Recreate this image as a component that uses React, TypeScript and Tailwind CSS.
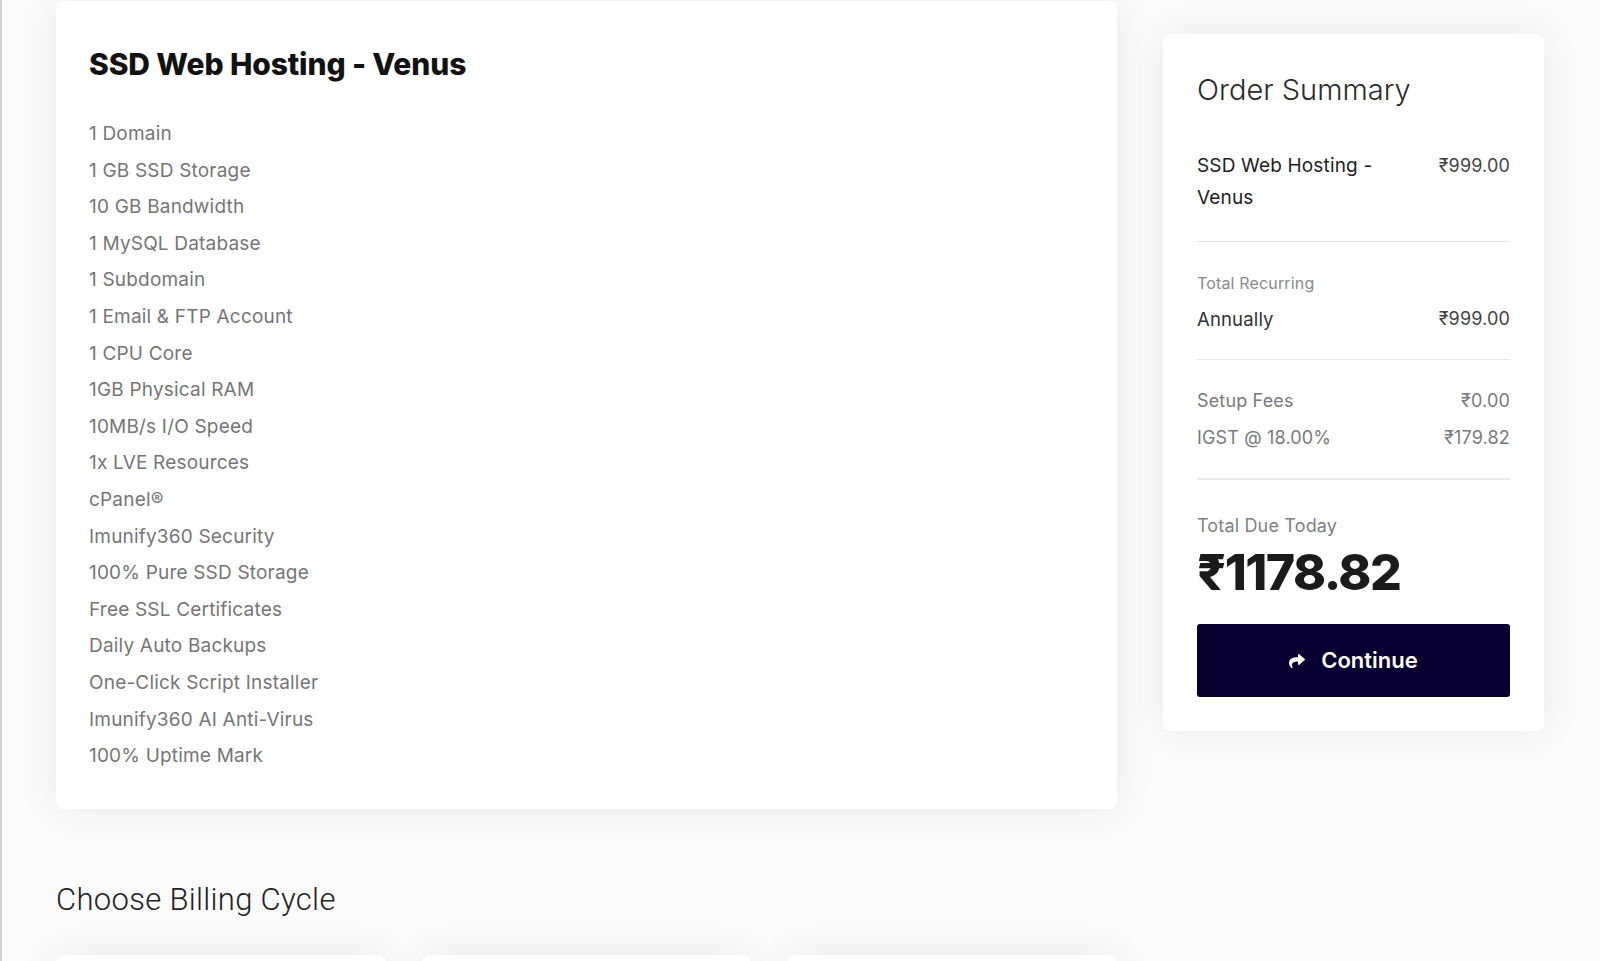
import { FaShare } from "react-icons/fa";

const features = [
  "1 Domain",
  "1 GB SSD Storage",
  "10 GB Bandwidth",
  "1 MySQL Database",
  "1 Subdomain",
  "1 Email & FTP Account",
  "1 CPU Core",
  "1GB Physical RAM",
  "10MB/s I/O Speed",
  "1x LVE Resources",
  "cPanel®",
  "Imunify360 Security",
  "100% Pure SSD Storage",
  "Free SSL Certificates",
  "Daily Auto Backups",
  "One-Click Script Installer",
  "Imunify360 AI Anti-Virus",
  "100% Uptime Mark",
];

function ProductCard() {
  return (
    <div className="mt-px rounded-lg bg-white pl-[33px] pr-8 pt-[45px] pb-[34px] shadow-[0_0_40px_rgba(0,0,0,0.07)]">
      <h2 className="text-[30px] leading-[36px] font-extrabold tracking-[-0.004em] text-[#121212]">
        SSD Web Hosting - Venus
      </h2>
      <ul className="mt-[34px]">
        {features.map((f) => (
          <li key={f} className="text-[19px] leading-[36.6px] tracking-[0.01em] text-[#767676]">
            {f}
          </li>
        ))}
      </ul>
    </div>
  );
}

function Divider({ thick }: { thick?: boolean }) {
  return <div className={thick ? "h-[2px] bg-[#e9e9e9]" : "h-px bg-[#e6e6e6]"} />;
}

function OrderSummary() {
  return (
    <div className="rounded-lg bg-white px-[34px] pt-[38px] pb-[34px] tracking-[0.01em] shadow-[0_0_40px_rgba(0,0,0,0.07)]">
      <h3 className="text-[29px] leading-[36px] font-light tracking-normal text-[#2a2a2a]">Order Summary</h3>

      <div className="mt-[42px] mb-[27px] flex justify-between gap-4">
        <div className="w-[200px] text-[19px] leading-[32px] text-[#1e1e1e]">
          SSD Web Hosting - Venus
        </div>
        <div className="text-[18px] leading-[32px] text-[#444]">₹999.00</div>
      </div>
      <Divider />

      <div className="mt-[29px] text-[16px] leading-[24px] text-[#8a8a8a]">Total Recurring</div>
      <div className="mt-2 mb-6 flex justify-between text-[18.5px] leading-[32px] text-[#333]">
        <span>Annually</span>
        <span className="text-[18px] text-[#444]">₹999.00</span>
      </div>
      <Divider />

      <div className="mt-[23px] mb-[22px] text-[18px] leading-[36.5px] text-[#7a7a7a]">
        <div className="flex justify-between">
          <span>Setup Fees</span>
          <span>₹0.00</span>
        </div>
        <div className="flex justify-between">
          <span>IGST @ 18.00%</span>
          <span>₹179.82</span>
        </div>
      </div>
      <Divider thick />

      <div className="mt-[34px] text-[18px] leading-[24px] text-[#7f7f7f]">Total Due Today</div>
      <div className="mt-1 text-[50px] leading-[60px] font-extrabold tracking-[-0.03em] text-[#1b1b1b]">
        ₹1178.82
      </div>

      <button
        type="button"
        className="mt-[22px] flex h-[73px] w-full items-center justify-center gap-4 rounded-[3px] bg-[#070030] text-[22px] font-semibold tracking-normal text-white"
      >
        <FaShare className="h-4 w-4" />
        Continue
      </button>
    </div>
  );
}

export default function App() {
  return (
    <div
      className="h-[961px] overflow-hidden border-l-2 border-[#d2d2d2] bg-[#fbfbfb]"
      style={{ fontFamily: "Inter, 'Noto Sans', sans-serif" }}
    >
      <div className="flex gap-[46px] pl-[54px]">
        <div className="w-[1061px]">
          <ProductCard />

          <h2
            className="mt-[73px] text-[31px] leading-[36px] font-light tracking-[0.01em] text-[#222]"
            style={{ fontFamily: "Roboto, 'Liberation Sans', sans-serif" }}
          >
            Choose Billing Cycle
          </h2>

          <div className="mt-[37px] grid grid-cols-3 gap-[36px]">
            <div className="h-[140px] rounded-lg bg-white shadow-[0_0_40px_rgba(0,0,0,0.07)]" />
            <div className="h-[140px] rounded-lg bg-white shadow-[0_0_40px_rgba(0,0,0,0.07)]" />
            <div className="h-[140px] rounded-lg bg-white shadow-[0_0_40px_rgba(0,0,0,0.07)]" />
          </div>
        </div>

        <div className="mt-[34px] w-[381px]">
          <OrderSummary />
        </div>
      </div>
    </div>
  );
}
